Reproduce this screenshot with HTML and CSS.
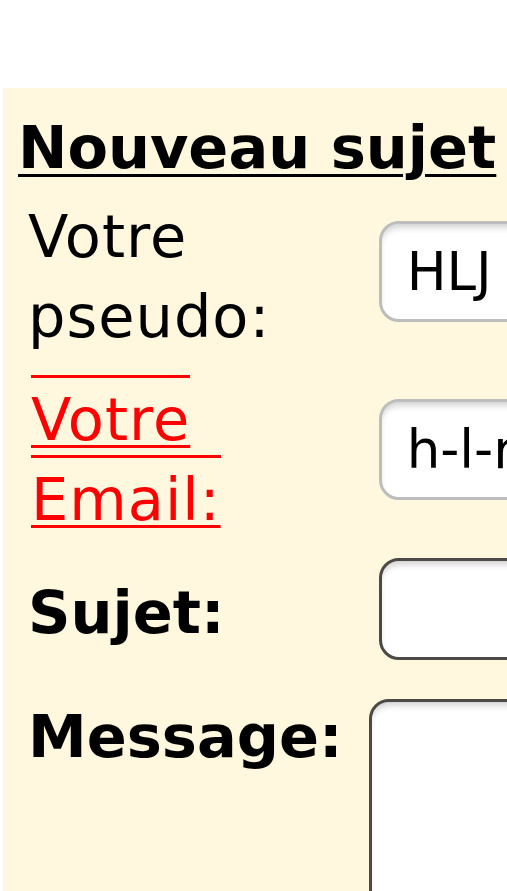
FILE: index.html
```html
<!DOCTYPE html>
<html lang="fr">
<head>
<meta charset="utf-8">
<title>Nouveau sujet</title>
<link rel="stylesheet" href="styles.css">
</head>
<body>
<div class="page">
  <form class="topic-box">
    <h1 class="topic-title">Nouveau sujet</h1>
    <div class="form-grid">
      <label class="field-label plain row1-label" for="pseudo">Votre pseudo:</label>
      <input class="field row1-input readonly" id="pseudo" type="text" value="HLJ" readonly>

      <div class="field-label plain email-cell row2-label"><a class="email-link" href="#">Votre Email:</a></div>
      <input class="field row2-input readonly" id="email" type="text" value="h-l-r@free.fr" readonly>

      <label class="field-label strong row3-label" for="sujet">Sujet:</label>
      <input class="field row3-input active" id="sujet" type="text" value="">

      <label class="field-label strong row4-label" for="message">Message:</label>
      <textarea class="message-area row4-input" id="message"></textarea>
    </div>
  </form>
</div>
</body>
</html>
```
FILE: styles.css
```css
html, body {
  margin: 0;
  padding: 0;
  overflow: hidden;
  background: #ffffff;
}

body {
  font-family: "DejaVu Sans", Verdana, sans-serif;
  color: #000;
}

.page {
  padding-top: 88px;
}

.topic-box {
  display: block;
  margin-left: 3px;
  background: #fff7de;
  padding: 20px 0 60px 15px;
  min-height: 900px;
}

.topic-title {
  margin: 0;
  font-size: 59px;
  line-height: 80px;
  font-weight: bold;
  white-space: nowrap;
  text-decoration: underline;
  text-decoration-thickness: 3px;
  text-underline-offset: 6px;
}

.form-grid {
  display: grid;
  grid-template-columns: min-content 1fr;
  column-gap: 27px;
  align-items: start;
  margin-left: 10px;
}

.field-label {
  font-size: 59px;
  line-height: 80px;
  color: #000;
}

.field-label.plain {
  letter-spacing: 1px;
}

.field-label.strong {
  font-weight: bold;
}

.email-cell {
  padding-left: 3px;
}

.email-link {
  color: #ff0000;
  text-decoration: underline;
  text-decoration-thickness: 3px;
  text-underline-offset: 5px;
  border-top: 3px solid #ff0000;
  padding-top: 7px;
  -webkit-box-decoration-break: clone;
  box-decoration-break: clone;
}

.field {
  box-sizing: border-box;
  display: block;
  width: 640px;
  height: 101px;
  margin: 0 0 0 9px;
  padding: 0 25px;
  border: 3px solid #bdbdbd;
  border-radius: 20px;
  background: #fff;
  box-shadow: inset 0 6px 7px -3px rgba(0, 0, 0, 0.2);
  font-family: "DejaVu Sans", Verdana, sans-serif;
  font-size: 53px;
  color: #000;
  outline: none;
}

.field.active {
  border-color: #4c4946;
  height: 102px;
}

.message-area {
  box-sizing: border-box;
  display: block;
  width: 640px;
  height: 320px;
  margin: 0 0 0 -1px;
  padding: 10px 24px;
  border: 3px solid #4c4946;
  border-radius: 20px;
  background: #fff;
  box-shadow: inset 0 6px 7px -3px rgba(0, 0, 0, 0.2);
  font-family: "DejaVu Sans", Verdana, sans-serif;
  font-size: 53px;
  resize: none;
  outline: none;
}

.row1-label { margin-top: 8.5px; }
.row1-input { margin-top: 33px; }

.row2-label { margin-top: 23px; }
.row2-input { margin-top: 42.5px; }

.row3-label { margin-top: 33px; }
.row3-input { margin-top: 18.5px; }

.row4-label { margin-top: 36.5px; }
.row4-input { margin-top: 39px; }
```
